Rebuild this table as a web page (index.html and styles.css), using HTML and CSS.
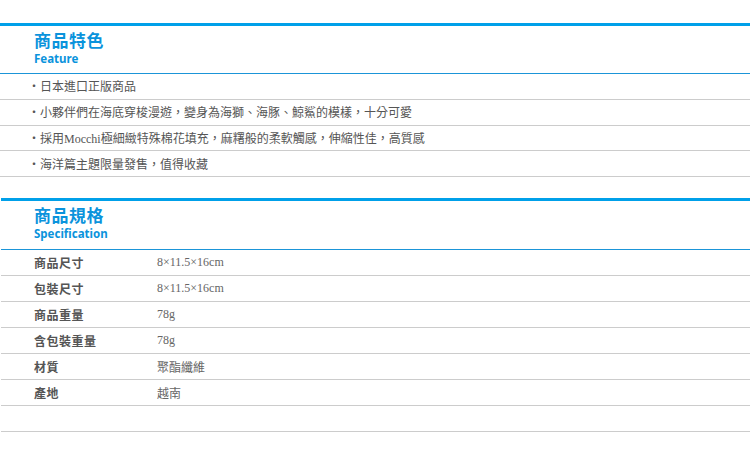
FILE: index.html
```html
<!DOCTYPE html>
<html lang="zh-Hant">
<head>
<meta charset="utf-8">
<link rel="stylesheet" href="styles.css">
</head>
<body>
<section class="block">
  <div class="head">
    <h2 class="title">商品特色</h2>
    <div class="sub">Feature</div>
  </div>
  <ul class="features">
    <li><span class="dot">・</span>日本進口正版商品</li>
    <li><span class="dot">・</span>小夥伴們在海底穿梭漫遊，變身為海獅、海豚、鯨鯊的模樣，十分可愛</li>
    <li><span class="dot">・</span>採用Mocchi極細緻特殊棉花填充，麻糬般的柔軟觸感，伸縮性佳，高質感</li>
    <li><span class="dot">・</span>海洋篇主題限量發售，值得收藏</li>
  </ul>
</section>
<section class="block block-spec">
  <div class="head">
    <h2 class="title">商品規格</h2>
    <div class="sub">Specification</div>
  </div>
  <div class="specs">
    <div class="row"><span class="label">商品尺寸</span><span class="value">8×11.5×16cm</span></div>
    <div class="row"><span class="label">包裝尺寸</span><span class="value">8×11.5×16cm</span></div>
    <div class="row"><span class="label">商品重量</span><span class="value">78g</span></div>
    <div class="row"><span class="label">含包裝重量</span><span class="value">78g</span></div>
    <div class="row"><span class="label">材質</span><span class="value">聚酯纖維</span></div>
    <div class="row"><span class="label">產地</span><span class="value">越南</span></div>
    <div class="row"><span class="label"></span><span class="value"></span></div>
  </div>
</section>
</body>
</html>
```

FILE: styles.css
```css
html, body {
  margin: 0;
  padding: 0;
  background: #ffffff;
}
body {
  padding-top: 23px;
  font-family: "Liberation Serif", "Noto Sans CJK TC", serif;
  color: #555555;
}
.block-spec {
  margin-top: 21px;
  margin-left: 1px;
}
.head {
  border-top: 3px solid #00a0e9;
  border-bottom: 1px solid #1b95d8;
  height: 47px;
  box-sizing: content-box;
  padding-left: 34px;
  display: flex;
  flex-direction: column;
  justify-content: flex-start;
}
.block-spec .head {
  height: 48px;
  padding-left: 33px;
}
.title {
  margin: 4px 0 0 0;
  font-family: "Noto Sans CJK TC", sans-serif;
  font-size: 17px;
  line-height: 20px;
  font-weight: 700;
  color: #0a93dc;
  letter-spacing: 0.5px;
}
.sub {
  font-family: "Noto Sans", "Open Sans", sans-serif;
  font-size: 11.5px;
  line-height: 14px;
  font-weight: 700;
  color: #0a93dc;
  margin-top: 2px;
}
.features {
  list-style: none;
  margin: 0;
  padding: 0;
}
.features li {
  height: 24.75px;
  border-bottom: 1px solid #cccccc;
  display: flex;
  align-items: center;
  padding-left: 28px;
  font-size: 12px;
  color: #555555;
  white-space: nowrap;
}
.dot {
  display: inline-block;
  width: 12px;
  font-size: 12px;
}
.specs .row {
  height: 25px;
  border-bottom: 1px solid #cccccc;
  display: flex;
  align-items: center;
  padding-left: 33px;
  font-size: 12px;
}
.label {
  width: 123px;
  font-family: "Noto Sans CJK TC", sans-serif;
  font-weight: 700;
  color: #555555;
  letter-spacing: 0.5px;
}
.value {
  color: #666666;
}
```
